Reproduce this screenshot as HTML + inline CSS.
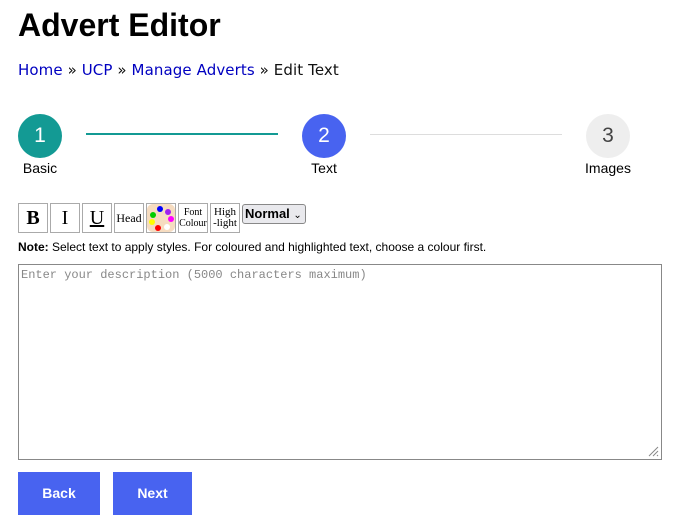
<!DOCTYPE html><html><head><style>
body{margin:0;background:#fff;font-family:"Liberation Sans",Arial,sans-serif;width:692px;height:530px;position:relative;overflow:hidden}
.a{position:absolute}
h1{position:absolute;left:18px;top:7px;margin:0;font-size:32px;font-weight:bold}
.bc{left:18px;top:61px;font-family:"DejaVu Sans",sans-serif;font-size:15px;color:#111;letter-spacing:0.1px}
.bc span{color:#0000c0}
.c{width:44px;height:44px;border-radius:50%;color:#fff;font-size:21px;text-align:center;line-height:44px;top:114px}
.lb{top:160px;font-size:14px;width:80px;text-align:center}
.tb{top:203px;width:28px;height:28px;border:1px solid #aaa;background:#fff;font-family:"Liberation Serif",serif;text-align:center;display:flex;align-items:center;justify-content:center}
.d{position:absolute;width:6px;height:6px;border-radius:50%}
.btn{top:472px;height:43px;background:#4863f0;color:#fff;font-weight:bold;font-size:14px;text-align:center;line-height:43px}
</style></head><body>
<h1>Advert Editor</h1>
<div class="a bc"><span>Home</span> » <span>UCP</span> » <span>Manage Adverts</span> » Edit Text</div>
<div class="a" style="left:86px;top:133px;width:192px;height:2px;background:#139a94"></div>
<div class="a" style="left:370px;top:134px;width:192px;height:1px;background:#ddd"></div>
<div class="a c" style="left:18px;background:#139a94">1</div>
<div class="a c" style="left:302px;background:#4863f0">2</div>
<div class="a c" style="left:586px;background:#eee;color:#444">3</div>
<div class="a lb" style="left:0">Basic</div>
<div class="a lb" style="left:284px">Text</div>
<div class="a lb" style="left:568px">Images</div>
<div class="a tb" style="left:18px;font-weight:bold;font-size:20px">B</div>
<div class="a tb" style="left:50px;font-size:20px">I</div>
<div class="a tb" style="left:82px;font-size:20px;text-decoration:underline">U</div>
<div class="a tb" style="left:114px;font-size:12px">Head</div>
<div class="a tb" style="left:146px"><div style="position:relative;width:28px;height:28px;background:#f6dcc0;border-radius:6px">
<div class="d" style="left:10px;top:2px;background:#00f"></div><div class="d" style="left:18px;top:5px;background:#a020f0"></div>
<div class="d" style="left:21px;top:12px;background:#f0f"></div><div class="d" style="left:3px;top:8px;background:#0c0"></div>
<div class="d" style="left:2px;top:15px;background:#ff0"></div><div class="d" style="left:8px;top:21px;background:#f00"></div>
<div class="d" style="left:17px;top:20px;background:#fff"></div></div></div>
<div class="a tb" style="left:178px;font-size:10px;line-height:11px">Font<br>Colour</div>
<div class="a tb" style="left:210px;font-size:11px;line-height:11px">High<br>-light</div>
<div class="a" style="left:242px;top:204px;border:1px solid #888;border-radius:3px;background:#e9e9ed;font-size:13px;font-weight:bold;line-height:18px;padding-left:2px;box-sizing:border-box;width:64px;height:20px">Normal <span style="font-weight:normal;font-size:10px">⌄</span></div>
<div class="a" style="left:18px;top:240px;font-size:12px"><b>Note:</b> Select text to apply styles. For coloured and highlighted text, choose a colour first.</div>
<div class="a" style="left:18px;top:264px;border:1px solid #888;font-family:'Liberation Mono',monospace;font-size:12px;color:#888;padding:3px 2px;box-sizing:border-box;width:644px;height:196px">Enter your description (5000 characters maximum)
<svg style="position:absolute;right:2px;bottom:2px" width="12" height="12"><path d="M11 2L2 11M11 6L6 11M11 10L10 11" stroke="#888" stroke-width="1"/></svg></div>
<div class="a btn" style="left:18px;width:82px">Back</div>
<div class="a btn" style="left:113px;width:79px">Next</div>
</body></html>
